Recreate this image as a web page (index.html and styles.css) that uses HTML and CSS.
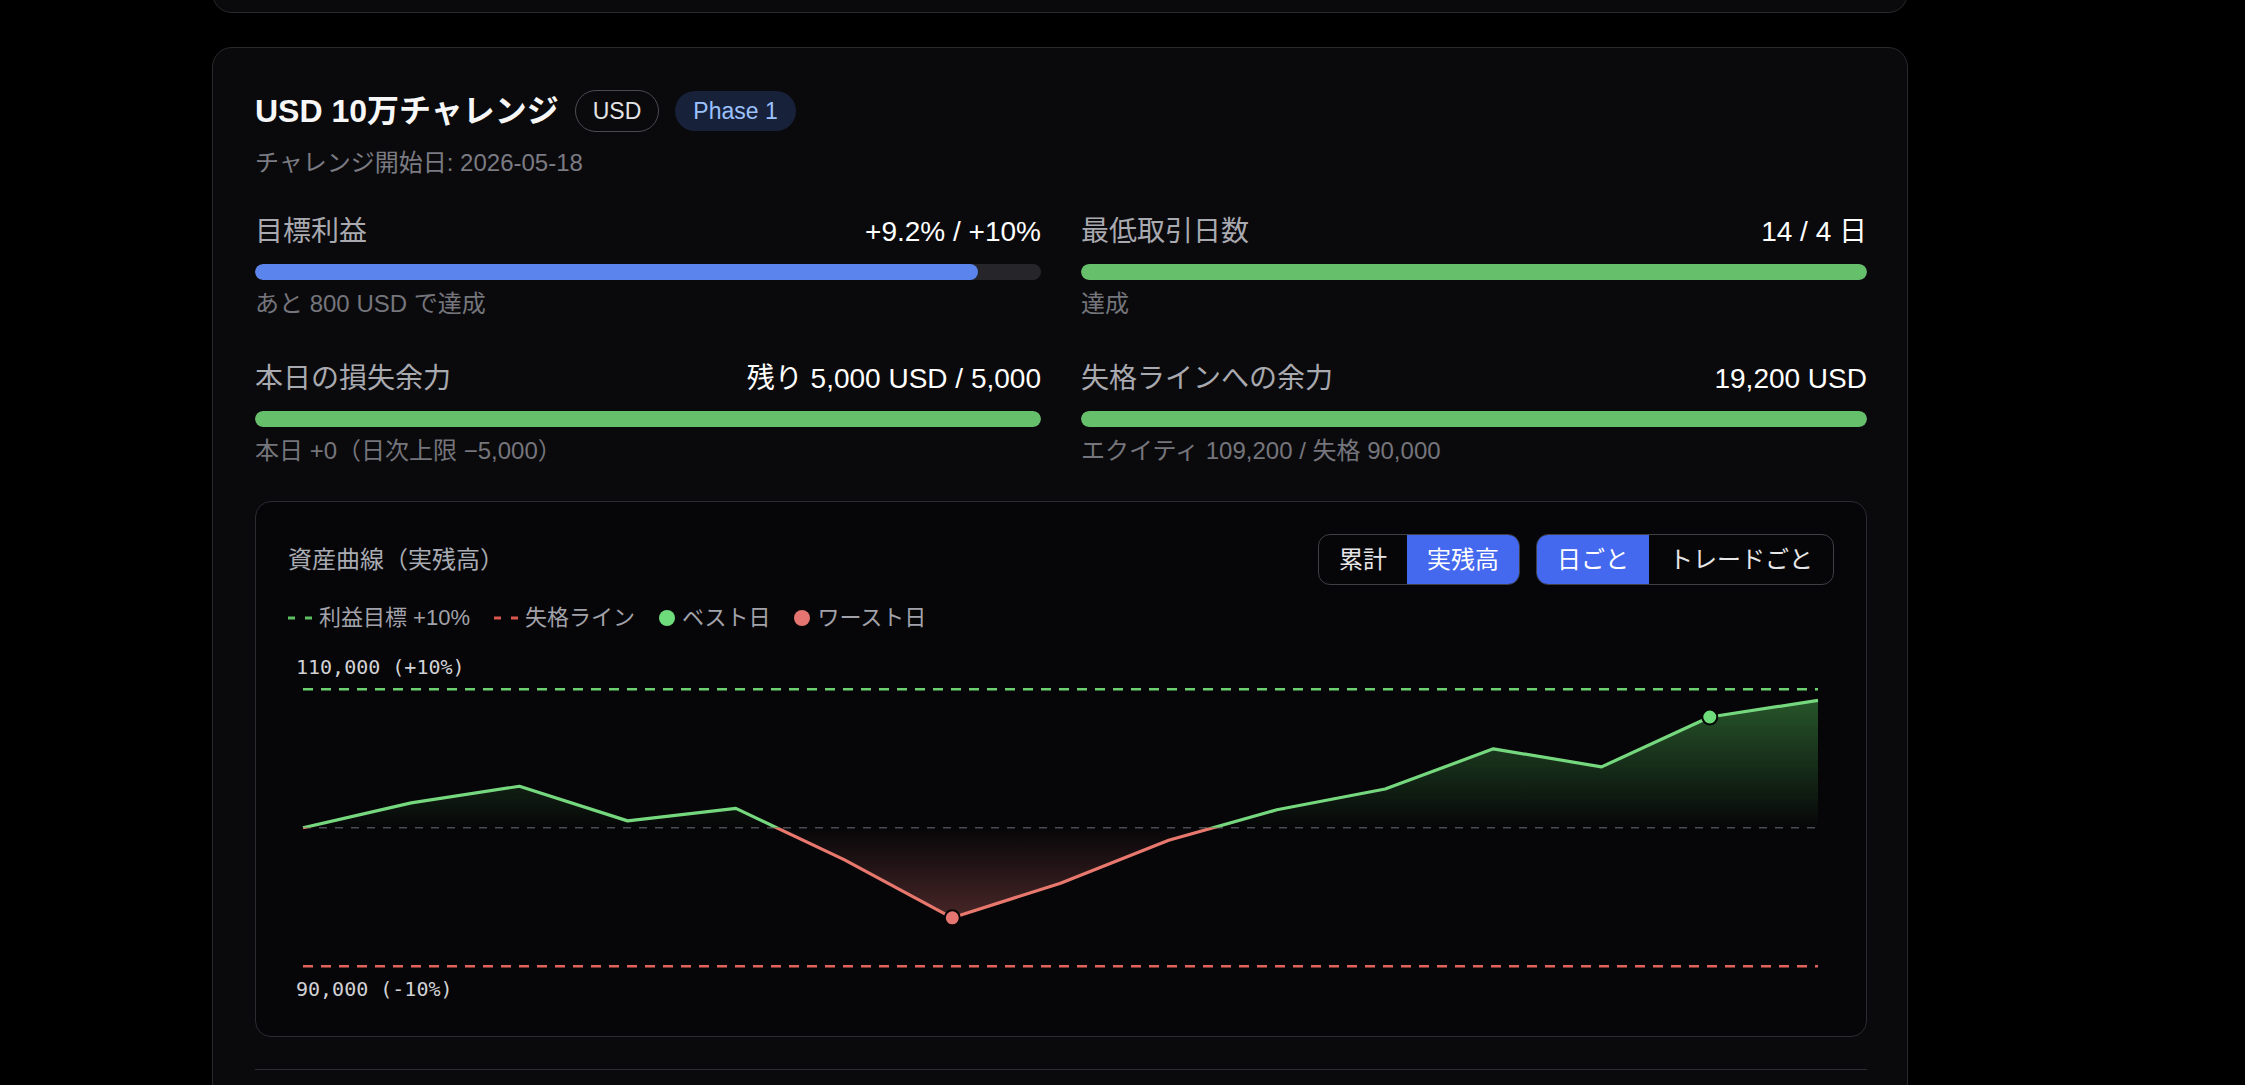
FILE: index.html
```html
<!DOCTYPE html>
<html lang="ja">
<head>
<meta charset="utf-8">
<title>USD 10万チャレンジ</title>
<link rel="stylesheet" href="styles.css">
</head>
<body>
<main class="page">
  <section class="card card-prev"></section>

  <section class="card">
    <header class="card-head">
      <h2 class="title">USD 10万チャレンジ</h2>
      <span class="pill pill-outline">USD</span>
      <span class="pill pill-phase">Phase 1</span>
    </header>
    <p class="start-date">チャレンジ開始日: 2026-05-18</p>

    <div class="metrics">
      <div class="metric">
        <div class="metric-head"><span class="metric-label">目標利益</span><span class="metric-value">+9.2% / +10%</span></div>
        <div class="bar"><div class="bar-fill fill-blue" style="width:92%"></div></div>
        <div class="metric-sub">あと 800 USD で達成</div>
      </div>
      <div class="metric">
        <div class="metric-head"><span class="metric-label">最低取引日数</span><span class="metric-value">14 / 4 日</span></div>
        <div class="bar"><div class="bar-fill fill-green" style="width:100%"></div></div>
        <div class="metric-sub">達成</div>
      </div>
      <div class="metric">
        <div class="metric-head"><span class="metric-label">本日の損失余力</span><span class="metric-value">残り 5,000 USD / 5,000</span></div>
        <div class="bar"><div class="bar-fill fill-green" style="width:100%"></div></div>
        <div class="metric-sub">本日 +0（日次上限 −5,000）</div>
      </div>
      <div class="metric">
        <div class="metric-head"><span class="metric-label">失格ラインへの余力</span><span class="metric-value">19,200 USD</span></div>
        <div class="bar"><div class="bar-fill fill-green" style="width:100%"></div></div>
        <div class="metric-sub">エクイティ 109,200 / 失格 90,000</div>
      </div>
    </div>

    <div class="chart-box">
      <div class="chart-head">
        <h3 class="chart-title">資産曲線（実残高）</h3>
        <div class="toggles">
          <div class="seg"><button class="seg-btn">累計</button><button class="seg-btn active">実残高</button></div>
          <div class="seg"><button class="seg-btn active">日ごと</button><button class="seg-btn">トレードごと</button></div>
        </div>
      </div>

      <div class="legend">
        <span class="legend-item"><svg class="legend-dash" width="24" height="4" viewBox="0 0 24 4"><line x1="0" y1="2" x2="24" y2="2" stroke="#5cbf62" stroke-width="3" stroke-dasharray="7 10"/></svg>利益目標 +10%</span>
        <span class="legend-item"><svg class="legend-dash" width="24" height="4" viewBox="0 0 24 4"><line x1="0" y1="2" x2="24" y2="2" stroke="#d9574f" stroke-width="3" stroke-dasharray="7 10"/></svg>失格ライン</span>
        <span class="legend-item"><span class="legend-dot dot-green"></span>ベスト日</span>
        <span class="legend-item"><span class="legend-dot dot-red"></span>ワースト日</span>
      </div>

      <svg class="chart" width="1546" height="354" viewBox="0 0 1546 354">
        <defs>
          <clipPath id="clipUp"><rect x="0" y="0" width="1546" height="177.8"/></clipPath>
          <clipPath id="clipDown"><rect x="0" y="177.8" width="1546" height="200"/></clipPath>
          <linearGradient id="gradUp" gradientUnits="userSpaceOnUse" x1="0" y1="50" x2="0" y2="177.8">
            <stop offset="0" stop-color="#4caf50" stop-opacity="0.47"/>
            <stop offset="1" stop-color="#4caf50" stop-opacity="0"/>
          </linearGradient>
          <linearGradient id="gradDown" gradientUnits="userSpaceOnUse" x1="0" y1="177.8" x2="0" y2="268">
            <stop offset="0" stop-color="#e57373" stop-opacity="0"/>
            <stop offset="1" stop-color="#e57373" stop-opacity="0.3"/>
          </linearGradient>
        </defs>

        <polygon clip-path="url(#clipUp)" fill="url(#gradUp)" points="15,177.8 123.21,152.87 231.43,136.25 339.64,170.88 447.86,158.41 556.07,209.66 664.29,267.83 772.5,233.2 880.71,190.27 988.93,159.8 1097.14,139.02 1205.36,98.86 1313.57,116.86 1421.79,67 1530,50.38 1530,177.8"/>
        <polygon clip-path="url(#clipDown)" fill="url(#gradDown)" points="15,177.8 123.21,152.87 231.43,136.25 339.64,170.88 447.86,158.41 556.07,209.66 664.29,267.83 772.5,233.2 880.71,190.27 988.93,159.8 1097.14,139.02 1205.36,98.86 1313.57,116.86 1421.79,67 1530,50.38 1530,177.8"/>

        <line x1="15" y1="177.8" x2="1530" y2="177.8" stroke="#4a4a52" stroke-width="1.6" stroke-dasharray="8 8"/>
        <line x1="15" y1="39.3" x2="1530" y2="39.3" stroke="#6ccf70" stroke-width="2.4" stroke-dasharray="10 8"/>
        <line x1="15" y1="316.3" x2="1530" y2="316.3" stroke="#e2635b" stroke-width="2.4" stroke-dasharray="10 8"/>

        <polyline clip-path="url(#clipUp)" fill="none" stroke="#76d87e" stroke-width="3.2" stroke-linejoin="round" points="15,177.8 123.21,152.87 231.43,136.25 339.64,170.88 447.86,158.41 556.07,209.66 664.29,267.83 772.5,233.2 880.71,190.27 988.93,159.8 1097.14,139.02 1205.36,98.86 1313.57,116.86 1421.79,67 1530,50.38"/>
        <polyline clip-path="url(#clipDown)" fill="none" stroke="#e8786e" stroke-width="3.2" stroke-linejoin="round" points="15,177.8 123.21,152.87 231.43,136.25 339.64,170.88 447.86,158.41 556.07,209.66 664.29,267.83 772.5,233.2 880.71,190.27 988.93,159.8 1097.14,139.02 1205.36,98.86 1313.57,116.86 1421.79,67 1530,50.38"/>

        <circle cx="1421.79" cy="67" r="7.5" fill="#6fdc7c" stroke="#050505" stroke-width="2"/>
        <circle cx="664.29" cy="267.83" r="7.5" fill="#e57570" stroke="#050505" stroke-width="2"/>

        <text class="axis-label" x="8" y="24">110,000 (+10%)</text>
        <text class="axis-label" x="8" y="346">90,000 (-10%)</text>
      </svg>
    </div>

    <hr class="divider">
    <div class="next-section"></div>
  </section>
</main>
</body>
</html>
```

FILE: styles.css
```css
* {
  box-sizing: border-box;
}

html, body {
  margin: 0;
  padding: 0;
  background: #000000;
}

body {
  font-family: "Liberation Sans", "Noto Sans CJK JP", sans-serif;
  color: #f2f2f2;
  overflow: hidden;
}

.page {
  width: 1696px;
  margin-left: 212px;
}

.card {
  background: #0a0a0c;
  border: 1px solid #2a2a2e;
  border-radius: 20px;
  padding: 42px 40px 40px 42px;
}

.card-prev {
  height: 100px;
  margin-top: -87px;
  margin-bottom: 34px;
  padding: 0;
}

.card-head {
  display: flex;
  align-items: center;
  gap: 16px;
  height: 42px;
}

.title {
  margin: 0;
  font-size: 32px;
  line-height: 42px;
  font-weight: 700;
  color: #f7f7f7;
}

.pill {
  display: inline-flex;
  align-items: center;
  border-radius: 999px;
  font-size: 23px;
  white-space: nowrap;
}

.pill-outline {
  height: 42px;
  padding: 0 17px;
  border: 1px solid #4a4a50;
  color: #e4e4e6;
}

.pill-phase {
  height: 40px;
  padding: 0 18px;
  background: #18213a;
  color: #9cc2ff;
}

.start-date {
  margin: 13px 0 0;
  font-size: 24px;
  line-height: 36px;
  color: #7b7b83;
}

.metrics {
  margin-top: 30px;
  display: grid;
  grid-template-columns: 1fr 1fr;
  column-gap: 40px;
  row-gap: 36px;
}

.metric-head {
  display: flex;
  justify-content: space-between;
  align-items: baseline;
  height: 42px;
  font-size: 28px;
  line-height: 42px;
}

.metric-label {
  color: #a9a9b0;
}

.metric-value {
  color: #ffffff;
}

.bar {
  margin-top: 11px;
  height: 16px;
  border-radius: 8px;
  background: #26262a;
  overflow: hidden;
}

.bar-fill {
  height: 100%;
  border-radius: 8px;
}

.fill-blue {
  background: #5b84ec;
}

.fill-green {
  background: #66bf6a;
}

.metric-sub {
  margin-top: 6px;
  font-size: 24px;
  line-height: 36px;
  color: #75757c;
}

.chart-box {
  margin-top: 32px;
  border: 1px solid #2b2b30;
  border-radius: 16px;
  background: #060608;
  padding: 32px;
}

.chart-head {
  display: flex;
  justify-content: space-between;
  align-items: center;
  height: 51px;
}

.chart-title {
  margin: 0;
  font-size: 24px;
  line-height: 36px;
  font-weight: 400;
  color: #a9abb3;
}

.toggles {
  display: flex;
  gap: 16px;
}

.seg {
  display: flex;
  height: 51px;
  border: 1px solid #3f3f45;
  border-radius: 12px;
  overflow: hidden;
}

.seg-btn {
  height: 49px;
  padding: 0 20px;
  border: 0;
  background: transparent;
  color: #e6e6e8;
  font-family: inherit;
  font-size: 24px;
  line-height: 49px;
  cursor: pointer;
}

.seg-btn.active {
  background: #4468ee;
  color: #ffffff;
}

.legend {
  margin-top: 17px;
  display: flex;
  align-items: center;
  gap: 24px;
  height: 32px;
  font-size: 22px;
  line-height: 32px;
  color: #a2a2aa;
}

.legend-item {
  display: inline-flex;
  align-items: center;
  gap: 7px;
}

.legend-dash {
  display: block;
}

.legend-dot {
  display: inline-block;
  width: 16px;
  height: 16px;
  border-radius: 50%;
}

.dot-green {
  background: #6fdc7c;
}

.dot-red {
  background: #e57570;
}

.chart {
  display: block;
  margin-top: 16px;
  width: 1546px;
  height: 354px;
}

.axis-label {
  font-family: "DejaVu Sans Mono", "Liberation Mono", monospace;
  font-size: 20px;
  fill: #d2d2d6;
}

.divider {
  margin: 32px 0 0;
  border: 0;
  border-top: 1px solid #2c2c31;
  height: 0;
}

.next-section {
  height: 140px;
}
```
